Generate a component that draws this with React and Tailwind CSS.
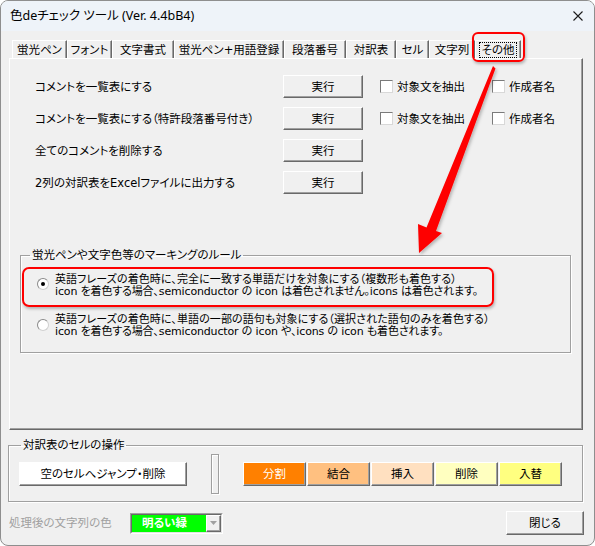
import React from "react";

const btn3d =
  "border border-t-white border-l-white border-r-[#696969] border-b-[#696969] shadow-[inset_-1px_-1px_0_#a0a0a0] flex items-center justify-center";

const tabs = [
  { t: "蛍光ペン", w: "w-[55px]" },
  { t: "フォント", w: "w-[45px]" },
  { t: "文字書式", w: "w-[62px]" },
  { t: "蛍光ペン+用語登録", w: "w-[110px]" },
  { t: "段落番号", w: "w-[62px]" },
  { t: "対訳表", w: "w-[50px]" },
  { t: "セル", w: "w-[33px]" },
  { t: "文字列", w: "w-[46px]" },
  { t: "その他", w: "w-[46px]", sel: true },
];

function Check({ label, className = "" }) {
  return (
    <div className={"flex items-center gap-[4px] " + className}>
      <span className="w-[13px] h-[13px] bg-white border border-t-[#7a7a7a] border-l-[#7a7a7a] border-r-[#d8d8d8] border-b-[#d8d8d8] shrink-0" />
      <span className="whitespace-nowrap">{label}</span>
    </div>
  );
}

function Row({ text, checks }) {
  return (
    <div className="flex items-center h-[23px]">
      <span className="w-[248px] whitespace-nowrap">{text}</span>
      <button className={btn3d + " w-[80px] h-[23px] bg-[#f0f0f0]"}>実行</button>
      {checks && (
        <div className="ml-[17px] flex items-center">
          <Check label="対象文を抽出" className="w-[112px]" />
          <Check label="作成者名" />
        </div>
      )}
    </div>
  );
}

function Radio({ checked }) {
  return (
    <span className="w-[12px] h-[12px] rounded-full bg-white border border-t-[#8a8a8a] border-l-[#8a8a8a] border-r-[#d0d0d0] border-b-[#d0d0d0] flex items-center justify-center shrink-0">
      {checked && <span className="w-[4px] h-[4px] rounded-full bg-black" />}
    </span>
  );
}

export default function App() {
  return (
    <div className="w-[595px] h-[546px] relative overflow-hidden rounded-[8px] border border-[#8e8e8e] bg-[#f0f0f0] text-[11.5px] leading-[14px] text-black [font-family:'DejaVu_Sans','Noto_Sans_CJK_JP',sans-serif] [font-feature-settings:'palt']">
      {/* title bar */}
      <div className="h-[30px] bg-[#eef3f9] flex items-center justify-between pl-[9px] pr-[11px]">
        <span className="[font-family:'Noto_Sans','Noto_Sans_CJK_JP',sans-serif] text-[12.5px]">
          色deチェック ツール (Ver. 4.4bB4)
        </span>
        <svg width="10" height="10" viewBox="0 0 10 10">
          <path d="M0.5 0.5L9.5 9.5M9.5 0.5L0.5 9.5" stroke="#1b1b1b" strokeWidth="1.1" />
        </svg>
      </div>

      <div className="px-[7px]">
        {/* tabs */}
        <div className="mt-[9px] h-[18px] flex pl-[4px]">
          {tabs.map((tab) => (
            <div
              key={tab.t}
              className={
                tab.w +
                " h-[18px] flex items-center justify-center whitespace-nowrap border-t border-l border-r border-t-white border-l-white border-r-[#696969] shadow-[inset_-1px_0_0_#a0a0a0]"
              }
            >
              {tab.sel ? (
                <span className="border border-dotted border-black px-[2px] leading-[12px] py-[1px]">{tab.t}</span>
              ) : (
                tab.t
              )}
            </div>
          ))}
        </div>

        {/* panel */}
        <div className="ml-[1px] w-[574px] h-[372px] border border-t-white border-l-white border-r-[#696969] border-b-[#696969] shadow-[inset_-1px_-1px_0_#a0a0a0] flex flex-col">
          <div className="pl-[25px] pt-[16px] flex flex-col gap-[9px]">
            <Row text="コメントを一覧表にする" checks />
            <Row text="コメントを一覧表にする（特許段落番号付き）" checks />
            <Row text="全てのコメントを削除する" />
            <Row text="2列の対訳表をExcelファイルに出力する" />
          </div>

          <fieldset className="mt-[54px] ml-[10px] w-[551px] h-[105px] border border-[#a0a0a0] shadow-[1px_1px_0_#fff,inset_1px_1px_0_#fff]">
            <legend className="ml-[9px] px-[2px] leading-[14px]">蛍光ペンや文字色等のマーキングのルール</legend>
            <div className="pl-[16px] pt-[12px] flex flex-col gap-[16px] text-[11px]">
              <div className="flex items-start gap-[6px]">
                <span className="mt-[4px]">
                  <Radio checked />
                </span>
                <div className="leading-[12px] whitespace-nowrap">
                  <div className="tracking-[0.1px]">英語フレーズの着色時に、完全に一致する単語だけを対象にする（複数形も着色する）</div>
                  <div className="tracking-[-0.15px]">icon を着色する場合、semiconductor の icon は着色されません。icons は着色されます。</div>
                </div>
              </div>
              <div className="flex items-start gap-[6px]">
                <span className="mt-[5px]">
                  <Radio />
                </span>
                <div className="leading-[12px] whitespace-nowrap">
                  <div className="tracking-[0.1px]">英語フレーズの着色時に、単語の一部の語句も対象にする（選択された語句のみを着色する）</div>
                  <div className="tracking-[-0.15px]">icon を着色する場合、semiconductor の icon や、icons の icon も着色されます。</div>
                </div>
              </div>
            </div>
          </fieldset>
        </div>

        {/* bottom group */}
        <fieldset className="mt-[8px] w-[575px] h-[64px] border border-[#a0a0a0] shadow-[1px_1px_0_#fff,inset_1px_1px_0_#fff]">
          <legend className="ml-[12px] px-[2px] leading-[14px]">対訳表のセルの操作</legend>
          <div className="pl-[10px] pt-[2px] flex items-center">
            <button className={btn3d + " w-[168px] h-[24px] bg-white"}>空のセルへジャンプ・削除</button>
            <span className="ml-[24px] w-[8px] h-[40px] border border-[#a0a0a0] shadow-[1px_1px_0_#fff,inset_1px_1px_0_#fff]" />
            <div className="ml-[24px] flex gap-[1px]">
              <button className={btn3d + " w-[63px] h-[24px] bg-[#ff8000] text-white"}>分割</button>
              <button className={btn3d + " w-[63px] h-[24px] bg-[#ffc080]"}>結合</button>
              <button className={btn3d + " w-[63px] h-[24px] bg-[#ffe0c0]"}>挿入</button>
              <button className={btn3d + " w-[63px] h-[24px] bg-[#ffffc0]"}>削除</button>
              <button className={btn3d + " w-[63px] h-[24px] bg-[#ffff80]"}>入替</button>
            </div>
          </div>
        </fieldset>

        {/* bottom row */}
        <div className="mt-[9px] flex items-center h-[24px]">
          <span className="w-[122px] pl-[1px] text-[#a0a0a0] whitespace-nowrap">処理後の文字列の色</span>
          <div className="w-[93px] h-[21px] border border-t-[#a0a0a0] border-l-[#a0a0a0] border-r-white border-b-white">
            <div className="h-full flex border border-t-[#696969] border-l-[#696969] border-r-[#e3e3e3] border-b-[#e3e3e3]">
              <div className="flex-1 bg-[#00ff00] text-white flex items-center pl-[10px] font-bold whitespace-nowrap">明るい緑</div>
              <div className={btn3d + " w-[15px] h-full bg-[#f0f0f0]"}>
                <svg width="7" height="4" viewBox="0 0 7 4">
                  <path d="M0 0H7L3.5 4Z" fill="#a0a0a0" />
                </svg>
              </div>
            </div>
          </div>
          <button className={btn3d + " ml-auto mr-[3px] w-[78px] h-[24px] bg-[#f0f0f0]"}>閉じる</button>
        </div>
      </div>

      {/* overlays */}
      <div className="absolute left-[471px] top-[31px] w-[53px] h-[30px] border-2 border-[#fe0000] rounded-[6px] shadow-[1px_2px_3px_rgba(0,0,0,0.25)] pointer-events-none" />
      <div className="absolute left-[21px] top-[266px] w-[472px] h-[40px] border-2 border-[#fe0000] rounded-[7px] shadow-[1px_2px_3px_rgba(0,0,0,0.25)] pointer-events-none" />
      <svg
        className="absolute left-[-1px] top-[-1px] pointer-events-none"
        width="595"
        height="546"
        viewBox="0 0 595 546"
      >
        <defs>
          <filter id="sh" x="-20%" y="-20%" width="140%" height="140%">
            <feDropShadow dx="1.5" dy="2" stdDeviation="1.5" floodColor="#000" floodOpacity="0.25" />
          </filter>
        </defs>
        <path
          d="M493 66 L495.5 68.5 L436 231 L442 233 L419 253 L418 224 L426.5 227.5 Z"
          fill="#fe0000"
          filter="url(#sh)"
        />
      </svg>
    </div>
  );
}
